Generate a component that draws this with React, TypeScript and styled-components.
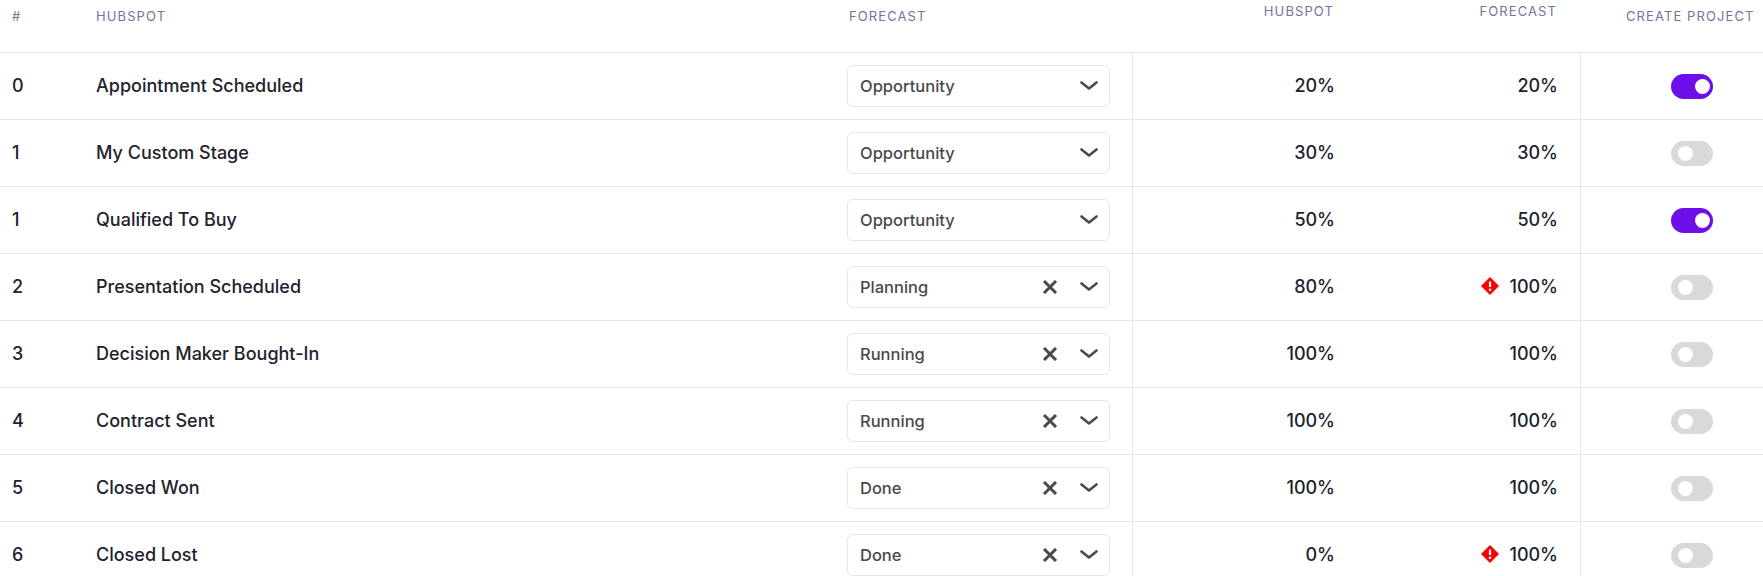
import React from "react";
import styled, { createGlobalStyle } from "styled-components";

const Global = createGlobalStyle`
  html, body { margin: 0; padding: 0; background: #fff; height: 576px; overflow: hidden; }
  body { font-family: Inter, "Liberation Sans", sans-serif; }
`;

const COLUMNS = "96px 751px 286px 224px 223px 183px";

const Table = styled.div`
  width: 1763px;
  display: flex;
  flex-direction: column;
`;

const HeaderRow = styled.div`
  display: grid;
  grid-template-columns: ${COLUMNS};
  height: 52px;
  border-bottom: 1px solid #e6e6e6;
`;

const HeaderCell = styled.div<{ $align?: "left" | "right"; $top: number; $pr?: number; $pl?: number }>`
  padding: ${(p) => p.$top}px ${(p) => p.$pr ?? 0}px 0 ${(p) => p.$pl ?? 0}px;
  text-align: ${(p) => p.$align ?? "left"};
  font-size: 13px;
  line-height: 16px;
  font-weight: 400;
  letter-spacing: 1.1px;
  color: #74749a;
  white-space: nowrap;
`;

const Row = styled.div`
  display: grid;
  grid-template-columns: ${COLUMNS};
  height: 66px;
  border-bottom: 1px solid #e6e6e6;
  align-items: stretch;
`;

const Cell = styled.div<{ $pl?: number }>`
  display: flex;
  align-items: center;
  padding-left: ${(p) => p.$pl ?? 0}px;
  margin-top: -1px;
  font-size: 18px;
  font-weight: 550;
  color: #22222e;
`;

const SelectCell = styled.div`
  display: flex;
  align-items: center;
  border-right: 1px solid #e6e6e6;
  box-sizing: border-box;
`;

const Select = styled.div`
  width: 263px;
  height: 42px;
  box-sizing: border-box;
  border: 1px solid #e6e6e6;
  border-radius: 6px;
  display: flex;
  align-items: center;
  padding: 0 11px 0 12px;
  font-size: 16.5px;
  font-weight: 550;
  color: #4a4a4a;
`;

const SelectLabel = styled.span`
  flex: 1;
`;

const ClearIcon = styled.svg`
  width: 16px;
  height: 14px;
  margin-right: 22px;
`;

const ChevronIcon = styled.svg`
  width: 18px;
  height: 10px;
`;

const NumberCell = styled.div`
  display: flex;
  align-items: center;
  justify-content: flex-end;
  padding-right: 22px;
  margin-top: -1px;
  font-size: 18px;
  font-weight: 550;
  color: #22222e;
`;

const WarnIcon = styled.svg`
  width: 18px;
  height: 18px;
  margin: -2px 10px 0 0;
`;

const ToggleCell = styled.div`
  display: flex;
  align-items: center;
  padding-left: 90px;
  border-left: 1px solid #e6e6e6;
`;

const Toggle = styled.div<{ $on: boolean }>`
  width: 42px;
  height: 25px;
  border-radius: 13px;
  background: ${(p) => (p.$on ? "#6e0fea" : "#d9d9d9")};
  display: flex;
  align-items: center;
  justify-content: ${(p) => (p.$on ? "flex-end" : "flex-start")};
  padding: 0 3px 0 7px;
  box-sizing: border-box;
  &::after {
    content: "";
    width: 15px;
    height: 15px;
    border-radius: 50%;
    background: #fff;
  }
`;

const rows = [
  { n: "0", name: "Appointment Scheduled", stage: "Opportunity", clear: false, hub: "20%", fc: "20%", warn: false, on: true },
  { n: "1", name: "My Custom Stage", stage: "Opportunity", clear: false, hub: "30%", fc: "30%", warn: false, on: false },
  { n: "1", name: "Qualified To Buy", stage: "Opportunity", clear: false, hub: "50%", fc: "50%", warn: false, on: true },
  { n: "2", name: "Presentation Scheduled", stage: "Planning", clear: true, hub: "80%", fc: "100%", warn: true, on: false },
  { n: "3", name: "Decision Maker Bought-In", stage: "Running", clear: true, hub: "100%", fc: "100%", warn: false, on: false },
  { n: "4", name: "Contract Sent", stage: "Running", clear: true, hub: "100%", fc: "100%", warn: false, on: false },
  { n: "5", name: "Closed Won", stage: "Done", clear: true, hub: "100%", fc: "100%", warn: false, on: false },
  { n: "6", name: "Closed Lost", stage: "Done", clear: true, hub: "0%", fc: "100%", warn: true, on: false },
];

export default function App() {
  return (
    <>
      <Global />
      <Table>
        <HeaderRow>
          <HeaderCell $top={8} $pl={12}>#</HeaderCell>
          <HeaderCell $top={8}>HUBSPOT</HeaderCell>
          <HeaderCell $top={8} $pl={2}>FORECAST</HeaderCell>
          <HeaderCell $top={3} $align="right" $pr={23}>HUBSPOT</HeaderCell>
          <HeaderCell $top={3} $align="right" $pr={23}>FORECAST</HeaderCell>
          <HeaderCell $top={8} $pl={46}>CREATE PROJECT</HeaderCell>
        </HeaderRow>
        {rows.map((r, i) => (
          <Row key={i}>
            <Cell $pl={12}>{r.n}</Cell>
            <Cell>{r.name}</Cell>
            <SelectCell>
              <Select>
                <SelectLabel>{r.stage}</SelectLabel>
                {r.clear && (
                  <ClearIcon viewBox="0 0 16 14">
                    <path d="M2 1l12 12M14 1L2 13" stroke="#4a4a4a" strokeWidth="3" fill="none" />
                  </ClearIcon>
                )}
                <ChevronIcon viewBox="0 0 18 10">
                  <path d="M1.5 1.5L9 7.5l7.5-6" stroke="#4a4a4a" strokeWidth="2.6" fill="none" strokeLinecap="round" strokeLinejoin="round" />
                </ChevronIcon>
              </Select>
            </SelectCell>
            <NumberCell>{r.hub}</NumberCell>
            <NumberCell>
              {r.warn && (
                <WarnIcon viewBox="0 0 18 18">
                  <path d="M9 0.5L17.5 9 9 17.5 0.5 9z" fill="#f60000" stroke="#f60000" strokeLinejoin="round" />
                  <path d="M9 4.5V10" stroke="#fff" strokeWidth="2.2" />
                  <circle cx="9" cy="12.7" r="1.3" fill="#fff" />
                </WarnIcon>
              )}
              {r.fc}
            </NumberCell>
            <ToggleCell>
              <Toggle $on={r.on} />
            </ToggleCell>
          </Row>
        ))}
      </Table>
    </>
  );
}
